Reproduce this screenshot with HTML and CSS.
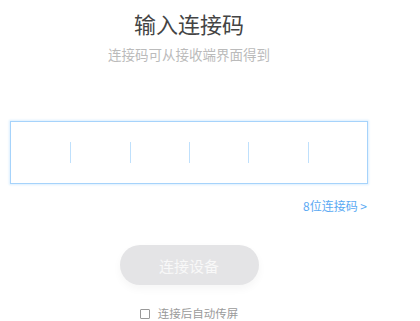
FILE: index.html
```html
<!DOCTYPE html>
<html lang="zh">
<head>
<meta charset="utf-8">
<link rel="stylesheet" href="styles.css">
</head>
<body>
<div class="page">
  <h1 class="title">输入连接码</h1>
  <p class="subtitle">连接码可从接收端界面得到</p>
  <div class="code-box">
    <div class="cell"></div>
    <div class="cell"></div>
    <div class="cell"></div>
    <div class="cell"></div>
    <div class="cell"></div>
    <div class="cell"></div>
  </div>
  <div class="link-row"><a class="link">8位连接码 &gt;</a></div>
  <div class="btn-row"><button class="btn">连接设备</button></div>
  <label class="check-row"><span class="check"></span><span>连接后自动传屏</span></label>
</div>
</body>
</html>
```
FILE: styles.css
```css
html, body {
  margin: 0;
  padding: 0;
  background: #fff;
}
body {
  font-family: "Noto Sans CJK SC", "Noto Sans", sans-serif;
}
.page {
  width: 358px;
  margin-left: 10px;
  padding-top: 7px;
  display: flex;
  flex-direction: column;
}
.title {
  margin: 0;
  font-size: 22px;
  line-height: 32px;
  font-weight: 400;
  color: #444;
  text-align: center;
}
.subtitle {
  margin: 5px 0 0;
  font-size: 13.5px;
  line-height: 20px;
  color: #bbb;
  text-align: center;
}
.code-box {
  margin-top: 57px;
  height: 61px;
  border: 1px solid #a6d3fb;
  box-shadow: 0 0 2px 1px #dcefff;
  display: grid;
  grid-template-columns: repeat(6, 1fr);
  align-items: center;
}
.cell {
  height: 21px;
  border-left: 1px solid #bfe0fc;
}
.cell:first-child {
  border-left: none;
}
.link-row {
  margin-top: 14px;
  display: flex;
  justify-content: flex-end;
}
.link {
  font-size: 12px;
  line-height: 16px;
  color: #5aa9f3;
  padding-right: 1px;
}
.btn-row {
  margin-top: 31px;
  display: flex;
  justify-content: center;
}
.btn {
  width: 139px;
  height: 40px;
  border: none;
  border-radius: 20px;
  background: #e4e4e6;
  color: #f8f8f8;
  font-family: inherit;
  font-size: 15px;
  box-shadow: 0 4px 8px rgba(0,0,0,0.04);
  padding: 0;
}
.check-row {
  margin-top: 22px;
  display: flex;
  align-items: center;
  justify-content: center;
  gap: 8px;
  font-size: 11.5px;
  line-height: 13px;
  color: #9a9a9a;
}
.check {
  width: 8px;
  height: 8px;
  border: 1px solid #999;
  border-radius: 1px;
}
```
